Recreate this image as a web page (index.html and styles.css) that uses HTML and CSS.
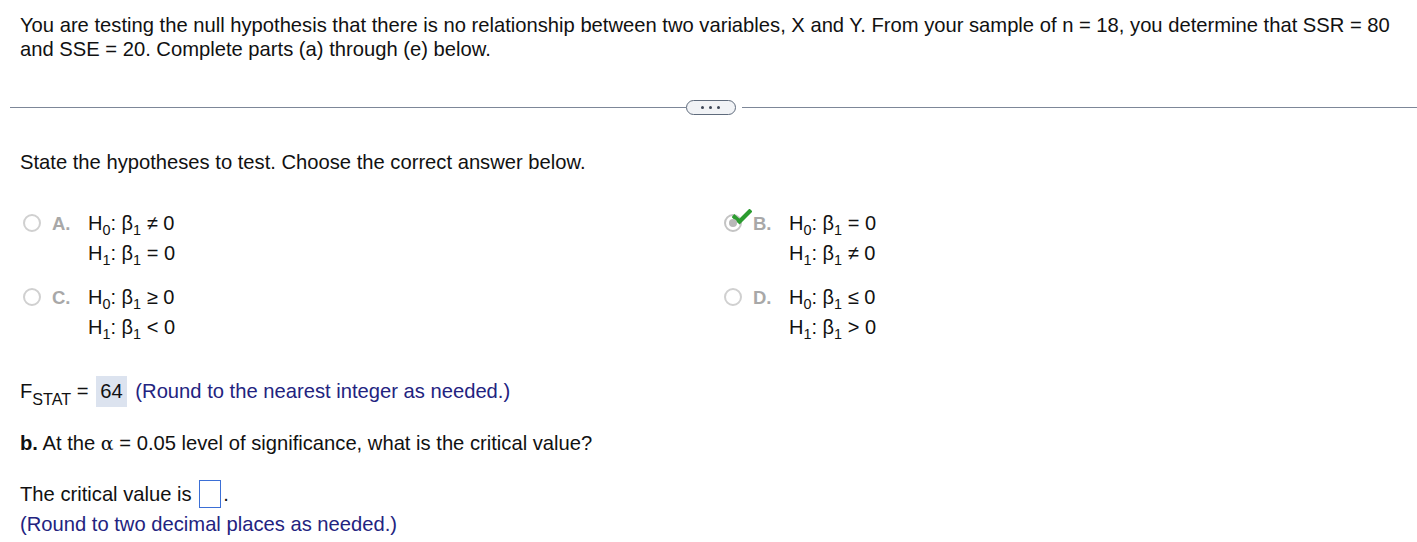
FILE: index.html
```html
<!DOCTYPE html>
<html>
<head>
<meta charset="utf-8">
<link rel="stylesheet" href="styles.css">
</head>
<body>
<div class="page">
  <p class="intro">You are testing the null hypothesis that there is no relationship between two variables, X and Y. From your sample of n = 18, you determine that SSR = 80 and SSE = 20. Complete parts (a) through (e) below.</p>

  <div class="divider">
    <div class="rule"></div>
    <div class="more"><span></span><span></span><span></span></div>
    <div class="rule"></div>
  </div>

  <p class="prompt">State the hypotheses to test. Choose the correct answer below.</p>

  <div class="options">
    <div class="opt">
      <span class="radio"></span><span class="letter">A.</span>
      <div class="math">
        <div>H<sub>0</sub>: β<sub>1</sub> ≠ 0</div>
        <div>H<sub>1</sub>: β<sub>1</sub> = 0</div>
      </div>
    </div>
    <div class="opt">
      <span class="radio checked">
        <svg class="tick" viewBox="0 0 20 16" width="20" height="16"><path d="M2.5 8 L7.5 12.5 L17.5 2.5" fill="none" stroke="#2b9c2f" stroke-width="4.2" stroke-linecap="square"/></svg>
      </span><span class="letter">B.</span>
      <div class="math">
        <div>H<sub>0</sub>: β<sub>1</sub> = 0</div>
        <div>H<sub>1</sub>: β<sub>1</sub> ≠ 0</div>
      </div>
    </div>
    <div class="opt">
      <span class="radio"></span><span class="letter">C.</span>
      <div class="math">
        <div>H<sub>0</sub>: β<sub>1</sub> ≥ 0</div>
        <div>H<sub>1</sub>: β<sub>1</sub> &lt; 0</div>
      </div>
    </div>
    <div class="opt">
      <span class="radio"></span><span class="letter">D.</span>
      <div class="math">
        <div>H<sub>0</sub>: β<sub>1</sub> ≤ 0</div>
        <div>H<sub>1</sub>: β<sub>1</sub> &gt; 0</div>
      </div>
    </div>
  </div>

  <p class="fstat">F<sub>STAT</sub> = <span class="answer">64</span> <span class="hint">(Round to the nearest integer as needed.)</span></p>

  <p class="partb"><b>b.</b> At the <span class="alpha">α</span> = 0.05 level of significance, what is the critical value?</p>

  <p class="crit">The critical value is <span class="box"></span>.<br><span class="hint">(Round to two decimal places as needed.)</span></p>
</div>
</body>
</html>
```
FILE: styles.css
```css
html, body {
  margin: 0;
  padding: 0;
  background: #ffffff;
}
body {
  font-family: "Liberation Sans", Arial, sans-serif;
  font-size: 20.2px;
  color: #111111;
}
.page {
  padding: 13px 20px 0 20px;
}
p {
  margin: 0;
}
.intro {
  line-height: 24px;
}
.divider {
  display: flex;
  align-items: center;
  margin: 39px -20px 0 -10px;
  height: 15px;
}
.rule {
  flex: 1;
  height: 1px;
  background: #7d8798;
}
.more {
  width: 48px;
  height: 13px;
  border: 1px solid #5f6b7c;
  border-radius: 8px;
  background: #f1f3f6;
  display: flex;
  align-items: center;
  justify-content: center;
  gap: 5px;
  margin-right: 6px;
}
.more span {
  width: 3px;
  height: 3px;
  border-radius: 50%;
  background: #3d4656;
}
.prompt {
  margin-top: 35px;
  line-height: 24px;
}
.options {
  display: grid;
  grid-template-columns: 701px 1fr;
  row-gap: 14px;
  margin-top: 34px;
}
.opt {
  display: flex;
  align-items: flex-start;
}
.radio {
  position: relative;
  width: 14px;
  height: 14px;
  border: 2px solid #d0d0d0;
  border-radius: 50%;
  margin: 6px 0 0 3px;
  box-sizing: content-box;
  flex: none;
}
.radio.checked {
  border-color: #c4c4c4;
}
.radio.checked::after {
  content: "";
  position: absolute;
  left: 3px;
  top: 3px;
  width: 8px;
  height: 8px;
  border-radius: 50%;
  background: #b8b8b8;
}
.tick {
  position: absolute;
  left: 6px;
  top: -7px;
}
.letter {
  color: #a8a8a8;
  font-weight: bold;
  font-size: 18.5px;
  width: 36px;
  margin-left: 11px;
  line-height: 30px;
  padding-top: 1px;
  flex: none;
}
.math {
  font-size: 20px;
  line-height: 30px;
  color: #111;
}
.math div {
  white-space: nowrap;
}
sub {
  font-size: 72%;
  vertical-align: -5px;
  line-height: 0;
}
.fstat {
  margin-top: 34px;
  line-height: 30px;
}
.fstat sub {
  font-size: 80%;
  vertical-align: -7px;
}
.answer {
  display: inline-block;
  background: #dce3ef;
  padding: 0 4px;
  margin-left: 2px;
  margin-right: 3px;
  line-height: 31px;
}
.hint {
  color: #23237f;
}
.partb {
  margin-top: 24px;
  line-height: 24px;
}
.alpha {
  font-family: "DejaVu Serif", serif;
  font-size: 19px;
}
.crit {
  margin-top: 24px;
  line-height: 30px;
}
.box {
  display: inline-block;
  width: 20px;
  height: 26px;
  border: 1px solid #3b6fd6;
  vertical-align: -7px;
  margin-left: 2px;
  margin-right: 2px;
}
```
